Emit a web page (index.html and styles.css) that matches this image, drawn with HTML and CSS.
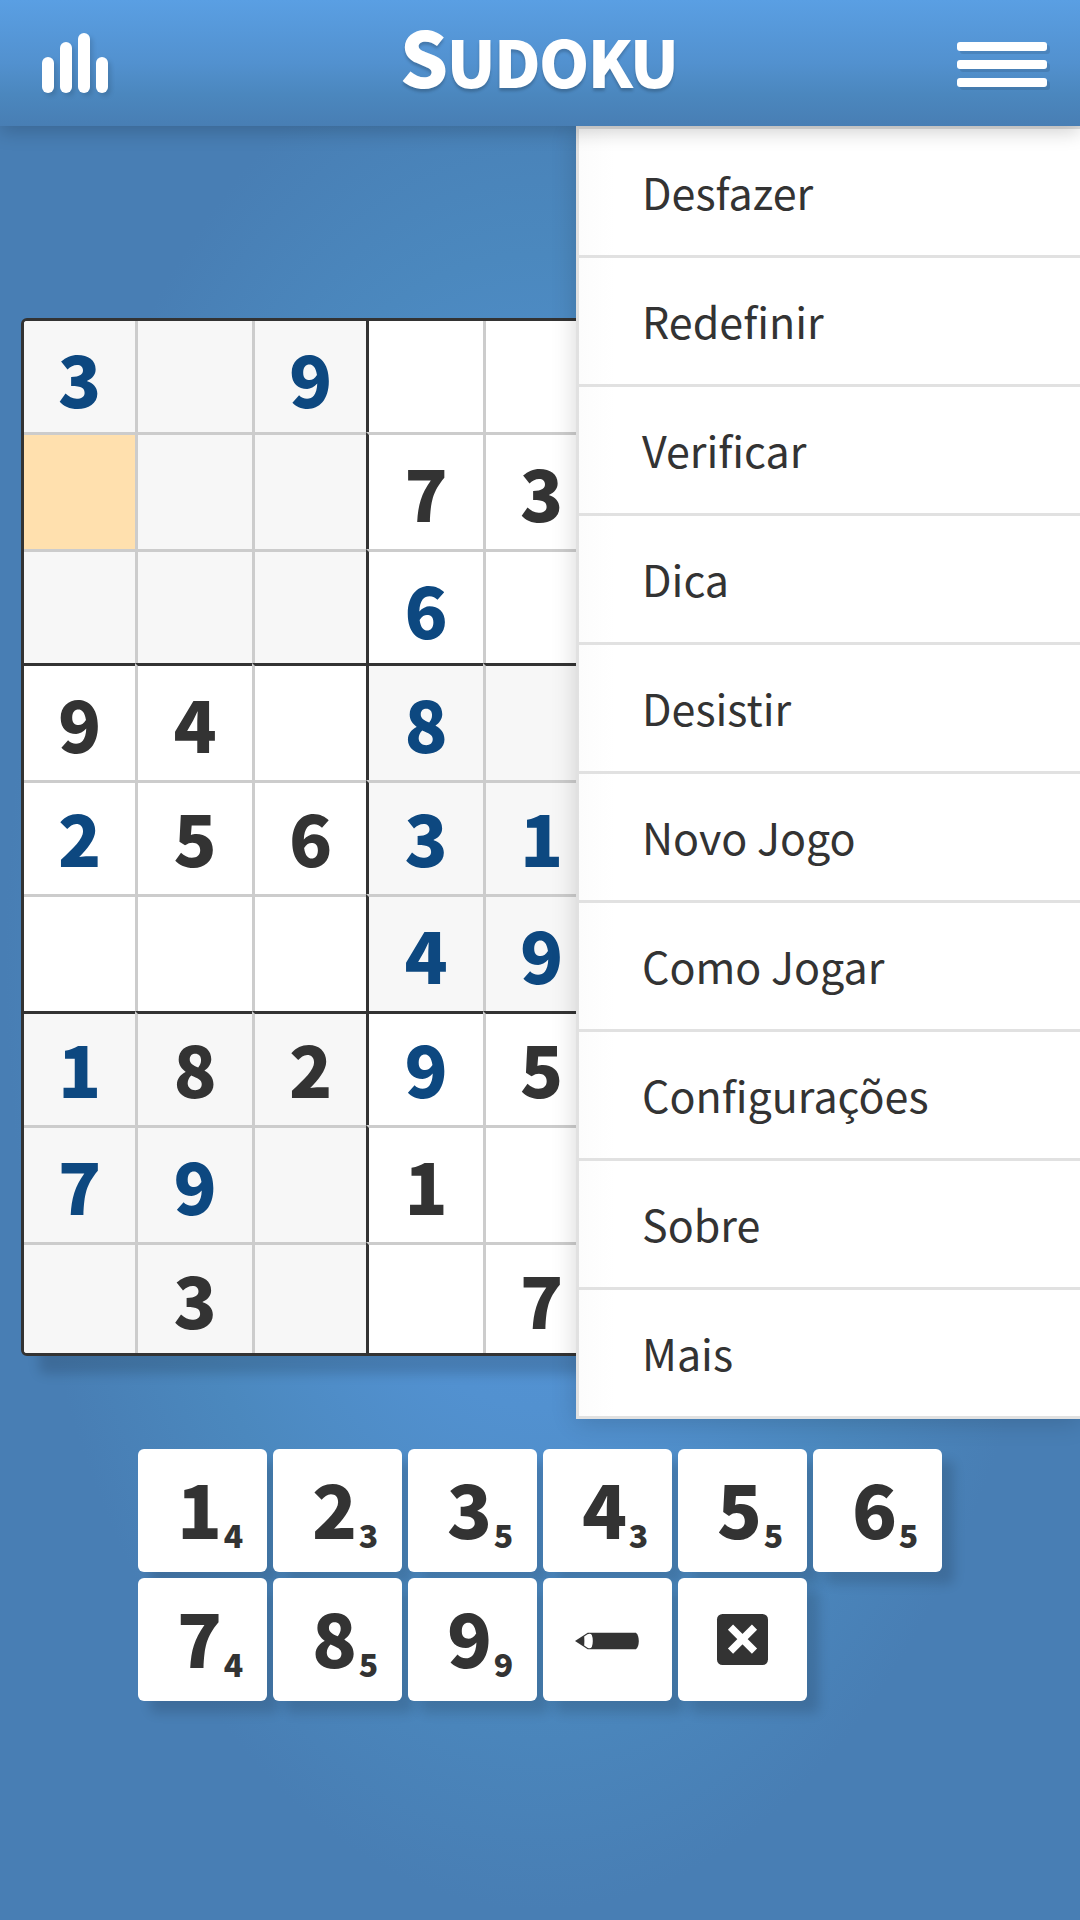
FILE: index.html
```html
<!DOCTYPE html>
<html lang="pt">
<head>
<meta charset="utf-8">
<title>Sudoku</title>
<link rel="stylesheet" href="styles.css">
</head>
<body>
<header class="topbar">
  <svg class="stats" width="66" height="60" viewBox="0 0 66 60" fill="#fff">
    <rect x="0" y="24" width="12" height="36" rx="6"/>
    <rect x="18" y="9" width="12" height="51" rx="6"/>
    <rect x="36" y="0" width="12" height="60" rx="6"/>
    <rect x="54" y="24" width="12" height="36" rx="6"/>
  </svg>
  <h1 class="title">Sudoku</h1>
  <div class="burger"><span></span><span></span><span></span></div>
</header>
<nav class="menu">
  <a class="item">Desfazer</a>
  <a class="item">Redefinir</a>
  <a class="item">Verificar</a>
  <a class="item">Dica</a>
  <a class="item">Desistir</a>
  <a class="item">Novo Jogo</a>
  <a class="item">Como Jogar</a>
  <a class="item">Configurações</a>
  <a class="item">Sobre</a>
  <a class="item">Mais</a>
</nav>
<main class="game">
  <div class="board">
    <div class="row"><i class="s g">3</i><i class="s"></i><i class="s g">9</i><i></i><i></i><i></i><i class="s"></i><i class="s"></i><i class="s"></i></div>
    <div class="row"><i class="sel"></i><i class="s"></i><i class="s"></i><i>7</i><i>3</i><i></i><i class="s"></i><i class="s"></i><i class="s"></i></div>
    <div class="row"><i class="s"></i><i class="s"></i><i class="s"></i><i class="g">6</i><i></i><i></i><i class="s"></i><i class="s"></i><i class="s"></i></div>
    <div class="row"><i>9</i><i>4</i><i></i><i class="s g">8</i><i class="s"></i><i class="s"></i><i></i><i></i><i></i></div>
    <div class="row high"><i class="g">2</i><i>5</i><i>6</i><i class="s g">3</i><i class="s g">1</i><i class="s"></i><i></i><i></i><i></i></div>
    <div class="row"><i></i><i></i><i></i><i class="s g">4</i><i class="s g">9</i><i class="s"></i><i></i><i></i><i></i></div>
    <div class="row high"><i class="s g">1</i><i class="s">8</i><i class="s">2</i><i class="g">9</i><i>5</i><i></i><i class="s"></i><i class="s"></i><i class="s"></i></div>
    <div class="row"><i class="s g">7</i><i class="s g">9</i><i class="s"></i><i>1</i><i></i><i></i><i class="s"></i><i class="s"></i><i class="s"></i></div>
    <div class="row high"><i class="s"></i><i class="s">3</i><i class="s"></i><i></i><i>7</i><i></i><i class="s"></i><i class="s"></i><i class="s"></i></div>
  </div>
  <div class="keypad">
    <div class="key"><b>1</b><small>4</small></div>
    <div class="key"><b>2</b><small>3</small></div>
    <div class="key"><b>3</b><small>5</small></div>
    <div class="key"><b>4</b><small>3</small></div>
    <div class="key"><b>5</b><small>5</small></div>
    <div class="key"><b>6</b><small>5</small></div>
    <div class="key"><b>7</b><small>4</small></div>
    <div class="key"><b>8</b><small>5</small></div>
    <div class="key"><b>9</b><small>9</small></div>
    <div class="key icon">
      <svg width="66" height="54" viewBox="0 0 66 54">
        <path d="M1 27 L13.700 18.700 H62 Q64.800 21.500 64.800 27 Q64.800 32.500 62 35.300 H13.700 Z" fill="#333"/>
        <path d="M10.200 22.500 L13.500 20.300 Q16.500 18.800 17.800 21 Q18.800 23.500 18.800 27 Q18.800 30.500 17.800 33 Q16.500 35.200 13.500 33.700 L10.200 31.500 Q10.600 27 10.200 22.500 Z" fill="#fff"/>
      </svg>
    </div>
    <div class="key icon">
      <svg width="66" height="54" viewBox="0 0 66 54">
        <rect x="8" y="0" width="51" height="51" rx="5.500" fill="#333"/>
        <path d="M21.500 13.200 L45.500 37.200 M45.500 13.200 L21.500 37.200" stroke="#fff" stroke-width="7.300"/>
      </svg>
    </div>
  </div>
</main>
</body>
</html>
```
FILE: styles.css
```css
* { box-sizing: border-box; }

body {
  margin: 0;
  width: 1080px;
  height: 1920px;
  overflow: hidden;
  position: relative;
  color: #333;
  font-family: "Noto Sans CJK SC", "Open Sans", sans-serif;
  background: radial-gradient(ellipse at 50% 50%, #5898dc 0%, #5291d0 33%, #4b88be 52%, #487eb4 70%);
}

.topbar {
  position: relative;
  z-index: 3;
  height: 126px;
  padding: 0 33px 0 42px;
  display: flex;
  justify-content: space-between;
  align-items: center;
  background: linear-gradient(#5a9fe3 0%, #5291cf 50%, #4b87be 75%, #487eb4 100%);
  box-shadow: 0 6px 18px rgba(0, 0, 0, .18);
}

.stats { filter: drop-shadow(3px 3px 2px rgba(0, 0, 0, .12)); }

.title {
  margin: 0 0 11px 12px;
  font-size: 64px;
  line-height: 100px;
  font-weight: 900;
  letter-spacing: -1.6px;
  color: #fff;
  text-transform: uppercase;
  text-shadow: 0 3px 3px rgba(0, 0, 0, .2);
}
.title::first-letter { font-size: 76px; }

.burger { display: grid; gap: 9px; width: 90px; margin-top: 3px; }
.burger span {
  height: 9px;
  border-radius: 3px;
  background: #fff;
  box-shadow: 3px 3px 0 rgba(0, 0, 0, .1);
}

/* Drop-down menu over the board */
.menu {
  position: absolute;
  z-index: 2;
  top: 126px;
  right: 0;
  width: 504px;
  border: solid #e1e1e1;
  border-width: 3px 0 0 3px;
  background: linear-gradient(90deg, #fcfcfc, #fff 36px);
  box-shadow: 0 3px 24px rgba(0, 0, 0, .16);
}
.item {
  display: block;
  height: 129px;
  padding-left: 63px;
  border-bottom: 3px solid #e1e1e1;
  font-size: 43px;
  line-height: 124px;
}

.game { padding: 192px 21px 0; }

.board {
  width: 1038px;
  border: 3px solid #333;
  border-radius: 6px;
  overflow: hidden;
  background: #fff;
  display: grid;
  grid-template-rows: 111px 117px 114px 117px 114px 117px 114px 117px 111px;
  box-shadow: 18px 18px 12px rgba(0, 0, 0, .15);
}
.row {
  display: grid;
  grid-template-columns: 111px 117px 114px 117px 114px 117px 114px 117px 111px;
  line-height: 113px;
}
.row.high { line-height: 107px; }
.row i {
  border: 0 solid #ccc;
  border-width: 3px 0 0 3px;
  font-style: normal;
  font-weight: 900;
  font-size: 71px;
  text-align: center;
}
.row:first-child i { border-top-width: 0; }
.row i:first-child { border-left-width: 0; }
.row:nth-child(3n+4) i { border-top-color: #333; }
.row i:nth-child(3n+4) { border-left-color: #333; }
.row .s { background: #f7f7f7; }
.row .g { color: #0d4880; }
.row .sel { background: #ffe0ae; }

.keypad {
  margin: 93px 117px 0;
  display: grid;
  grid-template-columns: repeat(6, 129px);
  grid-auto-rows: 123px;
  gap: 6px;
}
.key {
  display: flex;
  align-items: baseline;
  padding-left: 39px;
  border-radius: 6px;
  background: #fff;
  box-shadow: 12px 12px 12px rgba(0, 0, 0, .14);
}
.key b { width: 42px; text-align: center; font-weight: 900; font-size: 74px; line-height: 116px; }
.key small {
  width: 25px;
  margin-left: 2px;
  text-align: center;
  font-size: 32px;
  font-weight: 900;
  line-height: 40px;
  position: relative;
  top: 9px;
}
.icon { padding: 36px 0 0 31px; display: block; }
.icon svg { display: block; }
```
